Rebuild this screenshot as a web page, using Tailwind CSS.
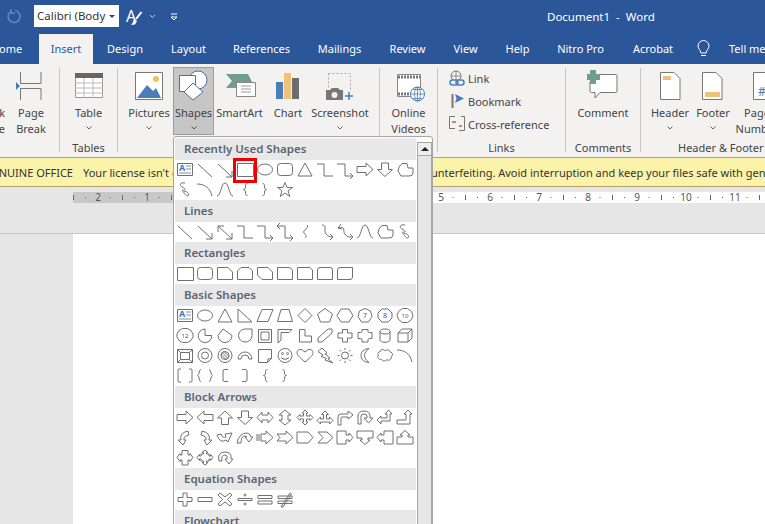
<!DOCTYPE html>
<html lang="en">
<head>
  <meta charset="UTF-8" />
  <title>Document1 - Word</title>
  <script src="https://cdn.jsdelivr.net/npm/@tailwindcss/browser@4"></script>
</head>
<body class="w-[765px] h-[524px] overflow-hidden relative bg-[#e6e6e6] text-[11px] leading-[16px] text-[#444] font-['Noto_Sans','Open_Sans',sans-serif]">

  <!-- Title bar -->
  <div class="h-[34px] bg-[#2b579a] flex items-center text-white">
    <svg class="w-[34px] h-[34px] shrink-0" viewBox="0 0 34 34" fill="none" stroke="#5f86c0" stroke-width="1.6"><path d="M10 12A6 6 0 1 0 15 10.500M11 9V13H15" /></svg>
    <div class="w-[85px] h-[22px] mt-[-2px] bg-white text-[#333] flex items-center pl-[3px] shrink-0 overflow-hidden whitespace-nowrap">
      <span class="w-[70px] overflow-hidden text-[11.500px]">Calibri (Body</span>
      <span class="ml-[2px] w-0 h-0 border-x-[3px] border-x-transparent border-t-[3px] border-t-[#444]"></span>
    </div>
    <svg class="w-[66px] h-[34px] shrink-0" viewBox="119 0 66 34" fill="none">
      <text x="126" y="22" font-size="16" fill="#fff" stroke="none" font-family="Noto Sans">A</text>
      <path d="M141.500 12L136 19" stroke="#fff" stroke-width="2" />
      <path d="M134 19L137 21L135 24.500L131 25Q133 23 134 19Z" fill="#fff" />
      <path d="M150 15L152.500 17.500L155 15" stroke="#c6d4ea" />
      <path d="M171 14H177M171 17H177L174 20Z" stroke="#fff" />
    </svg>
    <span class="ml-[362px] whitespace-nowrap text-[11.500px]">Document1&nbsp; -&nbsp; Word</span>
  </div>

  <!-- Tabs -->
  <div class="h-[30px] bg-[#2b579a] flex text-white whitespace-nowrap">
    <div class="w-[39px] shrink-0 overflow-hidden"><div class="w-[65px] h-[29px] ml-[-26px] flex justify-center items-center">Home</div></div>
    <div class="w-[54px] shrink-0 flex justify-center items-center pb-[1px] bg-[#f3f2f1] text-[#2b579a]">Insert</div>
    <div class="w-[64px] shrink-0 flex justify-center items-center pb-[1px]">Design</div>
    <div class="w-[63px] shrink-0 flex justify-center items-center pb-[1px]">Layout</div>
    <div class="w-[83px] shrink-0 flex justify-center items-center pb-[1px]">References</div>
    <div class="w-[73px] shrink-0 flex justify-center items-center pb-[1px]">Mailings</div>
    <div class="w-[63px] shrink-0 flex justify-center items-center pb-[1px]">Review</div>
    <div class="w-[53px] shrink-0 flex justify-center items-center pb-[1px]">View</div>
    <div class="w-[51px] shrink-0 flex justify-center items-center pb-[1px]">Help</div>
    <div class="w-[75px] shrink-0 flex justify-center items-center pb-[1px]">Nitro Pro</div>
    <div class="w-[70px] shrink-0 flex justify-center items-center pb-[1px]">Acrobat</div>
    <svg class="w-[41px] h-[30px] shrink-0" viewBox="688 34 41 30" fill="none" stroke="#fff"><path d="M701 53C700 49 698 49 698 46A5.500 5.500 0 0 1 709 46C709 49 707 49 706 53ZM701 55.500H706" /></svg>
    <div class="flex items-center pb-[1px]">Tell me</div>
  </div>

  <!-- Ribbon -->
  <div class="h-[93px] bg-[#f3f2f1] flex pt-[4px] whitespace-nowrap">
    <div class="w-[60px] h-[84px] shrink-0 border-r border-[#c8c6c4] flex flex-col">
      <div class="flex h-[68px]">
        <div class="w-[5px] pt-[37px] flex flex-col items-end overflow-hidden"><span>k</span><span>e</span></div>
        <div class="w-[52px] flex flex-col items-center">
          <svg class="w-[52px] h-[36px] shrink-0" viewBox="5 68 52 36" fill="none" stroke="#777"><path d="M20.500 72V83.500H41V72M20.500 100V88.500H41V100" /><path d="M16 82L20 86L16 90Z" fill="#4a7ebb" stroke="none" /></svg>
          <span class="text-center mt-[1px]">Page<br />Break</span>
        </div>
      </div>
    </div>
    <div class="w-[58px] h-[84px] shrink-0 border-r border-[#c8c6c4] flex flex-col items-center">
      <svg class="w-[57px] h-[36px] shrink-0" viewBox="60 68 57 36" fill="none">
        <path d="M75.500 73.500H102.500V97.500H75.500Z" fill="#fff" stroke="#999" />
        <path d="M75 73H103V78H75Z" fill="#666" />
        <path d="M75 83H103M75 88H103M75 93H103M84 78V98M93 78V98" stroke="#bbb" />
      </svg>
      <span class="mt-[1px]">Table</span>
      <svg class="w-[8px] h-[8px] mt-[3px]" viewBox="0 0 8 8" fill="none" stroke="#666"><path d="M1.500 2.500L4 5L6.500 2.500" /></svg>
      <span class="mt-auto mb-[-4px]">Tables</span>
    </div>
    <div class="w-[262px] h-[84px] shrink-0 border-r border-[#c8c6c4] flex pl-[7px]">
      <div class="w-[48px] h-[68px] flex flex-col items-center">
        <svg class="w-[48px] h-[36px] shrink-0" viewBox="125 68 48 36" fill="none">
          <path d="M135.500 72.500H162.500V99.500H135.500Z" fill="#fff" stroke="#777" />
          <circle cx="156" cy="79" r="3" fill="#f0c060" />
          <path d="M137 98L147 85L153 91L156 88L161 98Z" fill="#4a7ebb" />
        </svg>
        <span class="mt-[1px]">Pictures</span>
        <svg class="w-[8px] h-[8px] mt-[3px]" viewBox="0 0 8 8" fill="none" stroke="#666"><path d="M1.500 2.500L4 5L6.500 2.500" /></svg>
      </div>
      <div class="w-[41px] h-[68px] mt-[-1px] bg-[#c6c6c6] border border-[#9c9c9c] flex flex-col items-center">
        <svg class="w-[39px] h-[36px] shrink-0" viewBox="174 68 39 36" fill="none" stroke="#4a6fa5">
          <circle cx="198" cy="80" r="9" fill="#fff" />
          <path d="M179.500 75.500H195.500V91.500H179.500Z" fill="#fff" />
          <path d="M193 83L203 92L193 100L184 92Z" fill="#fff" />
        </svg>
        <span class="mt-[1px]">Shapes</span>
        <svg class="w-[8px] h-[8px] mt-[3px]" viewBox="0 0 8 8" fill="none" stroke="#555"><path d="M1.500 2.500L4 5L6.500 2.500" /></svg>
      </div>
      <div class="w-[51px] h-[68px] flex flex-col items-center">
        <svg class="w-[51px] h-[36px] shrink-0" viewBox="214 68 51 36" fill="none">
          <path d="M226 74H248L252 82H238V88H226L232 81Z" fill="#6f9d92" />
          <path d="M236.500 82.500H255.500V96.500H236.500Z" fill="#fff" stroke="#888" />
          <path d="M241 86H251M241 89H251M241 92H251" stroke="#999" />
        </svg>
        <span class="mt-[1px]">SmartArt</span>
      </div>
      <div class="w-[46px] h-[68px] flex flex-col items-center">
        <svg class="w-[46px] h-[36px] shrink-0" viewBox="265 68 46 36" fill="none">
          <path d="M276 82H283V99H276Z" fill="#4a7ebb" />
          <path d="M284 73H291V99H284Z" fill="#eec27a" />
          <path d="M292 78H299V99H292Z" fill="#6d6d6d" />
        </svg>
        <span class="mt-[1px]">Chart</span>
      </div>
      <div class="w-[58px] h-[68px] flex flex-col items-center">
        <svg class="w-[58px] h-[36px] shrink-0" viewBox="311 68 58 36" fill="none">
          <path d="M328.500 73.500H350.500V92" stroke="#aaa" stroke-dasharray="2 2" />
          <path d="M328.500 73.500V88" stroke="#aaa" stroke-dasharray="2 2" />
          <path d="M326 90H330L332 88H338L340 90H343V100H326Z" fill="#777" />
          <circle cx="334.500" cy="95" r="3" fill="#f3f2f1" />
          <path d="M349 92V100M345 96H353" stroke="#4a7ebb" stroke-width="1.500" />
        </svg>
        <span class="mt-[1px]">Screenshot</span>
        <svg class="w-[8px] h-[8px] mt-[3px]" viewBox="0 0 8 8" fill="none" stroke="#666"><path d="M1.500 2.500L4 5L6.500 2.500" /></svg>
      </div>
    </div>
    <div class="w-[58px] h-[84px] shrink-0 border-r border-[#c8c6c4] flex flex-col items-center">
      <svg class="w-[57px] h-[36px] shrink-0" viewBox="380 68 57 36" fill="none">
        <path d="M397.500 74.500H420.500V96.500H397.500Z" fill="#fff" stroke="#888" />
        <path d="M398 77H420M398 94H412" stroke="#777" stroke-width="3" stroke-dasharray="2 1" />
        <circle cx="417.500" cy="94" r="7" fill="#fff" stroke="#4a7ebb" />
        <path d="M410.500 94H424.500M417.500 87V101M413 89.500H422M413 98.500H422" stroke="#4a7ebb" stroke-width=".8" />
        <ellipse cx="417.500" cy="94" rx="3" ry="7" stroke="#4a7ebb" stroke-width=".8" />
      </svg>
      <span class="text-center mt-[1px]">Online<br />Videos</span>
    </div>
    <div class="w-[128px] h-[84px] shrink-0 border-r border-[#c8c6c4] flex flex-col">
      <div class="h-[23px] flex items-center">
        <svg class="w-[30px] h-[23px] shrink-0" viewBox="438 68 30 23" fill="none">
          <circle cx="456" cy="76" r="5" stroke="#777" />
          <path d="M451 76H461M456 71V81" stroke="#777" stroke-width=".8" />
          <rect x="450" y="80" width="8" height="5" rx="2.500" stroke="#4a7ebb" stroke-width="1.500" fill="#f3f2f1" />
          <rect x="456" y="80" width="8" height="5" rx="2.500" stroke="#4a7ebb" stroke-width="1.500" />
        </svg>
        <span class="mb-[2px]">Link</span>
      </div>
      <div class="h-[23px] flex items-center">
        <svg class="w-[30px] h-[23px] shrink-0" viewBox="438 91 30 23" fill="none">
          <path d="M452.500 94V108" stroke="#777" stroke-width="2" />
          <path d="M455 94L464 98.500L455 103L456.500 98.500Z" fill="#4a7ebb" />
        </svg>
        <span class="mb-[2px]">Bookmark</span>
      </div>
      <div class="h-[23px] flex items-center">
        <svg class="w-[30px] h-[23px] shrink-0" viewBox="438 114 30 23" fill="none">
          <path d="M455 116.500H449.500V128.500H455M461 116.500H464.500V130.500H459" stroke="#777" />
          <path d="M452 122H456M459 126H462" stroke="#d9534f" stroke-width="1.500" />
        </svg>
        <span class="mb-[2px]">Cross-reference</span>
      </div>
      <span class="text-center mt-auto mb-[-4px]">Links</span>
    </div>
    <div class="w-[75px] h-[84px] shrink-0 border-r border-[#c8c6c4] flex flex-col items-center">
      <svg class="w-[74px] h-[36px] shrink-0" viewBox="566 68 74 36" fill="none">
        <path d="M592 74.500H615.500Q617 74.500 617 76V91Q617 92.500 615.500 92.500H600L595 98V92.500H591.500Q590 92.500 590 91V82" fill="#fff" stroke="#777" />
        <path d="M590 70H596V74H600V80H596V84H590V80H587V74H590Z" fill="#6f9d92" />
      </svg>
      <span class="mt-[1px]">Comment</span>
      <span class="mt-auto mb-[-4px]">Comments</span>
    </div>
    <div class="h-[84px] flex flex-col shrink-0">
      <div class="flex h-[68px] pl-[7px]">
        <div class="w-[44px] flex flex-col items-center">
          <svg class="w-[44px] h-[36px] shrink-0" viewBox="648 68 44 36" fill="none">
            <path d="M660.500 72.500H674L680 78.500V99.500H660.500Z" fill="#fff" stroke="#777" />
            <path d="M663 76H671V80H663Z" fill="#eec27a" />
          </svg>
          <span class="mt-[1px]">Header</span>
          <svg class="w-[8px] h-[8px] mt-[3px]" viewBox="0 0 8 8" fill="none" stroke="#666"><path d="M1.500 2.500L4 5L6.500 2.500" /></svg>
        </div>
        <div class="w-[42px] flex flex-col items-center">
          <svg class="w-[42px] h-[36px] shrink-0" viewBox="692 68 42 36" fill="none">
            <path d="M702.500 72.500H716L722 78.500V99.500H702.500Z" fill="#fff" stroke="#777" />
            <path d="M705 92H720V97H705Z" fill="#eec27a" />
          </svg>
          <span class="mt-[1px]">Footer</span>
          <svg class="w-[8px] h-[8px] mt-[3px]" viewBox="0 0 8 8" fill="none" stroke="#666"><path d="M1.500 2.500L4 5L6.500 2.500" /></svg>
        </div>
        <div class="w-[46px] flex flex-col items-center">
          <svg class="w-[46px] h-[36px] shrink-0" viewBox="734 68 46 36" fill="none">
            <path d="M753.500 72.500H767L773 78.500V99.500H753.500Z" fill="#fff" stroke="#777" />
            <text x="758" y="96" font-size="12" fill="#4a7ebb" font-family="Noto Sans">#</text>
          </svg>
          <span class="text-center mt-[1px]">Page<br />Number</span>
        </div>
      </div>
      <span class="pl-[37px] mt-auto mb-[-4px]">Header &amp; Footer</span>
    </div>
  </div>

  <!-- License warning -->
  <div class="h-[30px] pt-[1px] bg-[#fbf3a9] border-y border-[#b9a36c] flex items-center whitespace-nowrap overflow-hidden text-[#333]">
    <span class="w-[73px] shrink-0 flex justify-end overflow-hidden">GENUINE OFFICE</span>
    <span class="w-[336px] ml-[10px] shrink-0 overflow-hidden">Your license isn't genuine, and you may be a victim of software</span>
    <span>counterfeiting. Avoid interruption and keep your files safe with genuine Office today.</span>
  </div>

  <!-- Ruler -->
  <div class="pl-[73px] pt-[5px] h-[47px] border-b border-[#c6c6c6]">
    <svg class="w-[692px] h-[11px] block" viewBox="73 192 692 11" fill="none" id="ruler"></svg>
  </div>

  <!-- Page -->
  <div class="ml-[73px] h-[300px] bg-white"></div>

  <!-- Shapes dropdown -->
  <div class="absolute left-[173px] top-[136px] w-[260px] h-[400px] bg-white border border-[#a6a6a6] rounded-t-[3px] flex">
    <div id="gallery" class="w-[241px] ml-[1px] mt-[1px] shrink-0"></div>
    <div class="w-[16px] ml-[1px] mt-[5px] bg-[#e6e6e6] border-x border-[#a6a6a6]">
      <div class="h-[14px] bg-[#eeeeee] border-y border-[#a6a6a6] flex items-center justify-center">
        <span class="w-0 h-0 border-x-[4px] border-x-transparent border-b-[4px] border-b-[#222]"></span>
      </div>
    </div>
  </div>

  <script>
    // ruler: number every inch, 0 sits at x=196
    let ruler = '<path d="M73 192H196V203H73Z" fill="#c8c8c8" /><path d="M196 192H765V203H196Z" fill="#fff" />';
    for (let n = -3; n <= 12; n++) {
      const x = 196 + n * 49;
      if (n !== 0) ruler += `<text x="${x}" y="201" font-size="10" text-anchor="middle" fill="#555" font-family="Noto Sans">${Math.abs(n)}</text>`;
      ruler += `<path d="M${x + 12} 197v1M${x + 36.5} 197v1M${x + 24.500} 195v5" stroke="#666" />`;
    }
    document.getElementById('ruler').innerHTML = ruler;

    const num = t => `<text x="10" y="12" font-size="${t.length > 1 ? 6 : 7}" text-anchor="middle" fill="#555" stroke="none" font-family="Noto Sans">${t}</text>`;
    const textbox = '<path d="M2.500 3.500H17.500V15.500H2.500Z" /><text x="4" y="11" font-size="9" font-weight="700" fill="#3b74c4" stroke="none" font-family="Noto Sans">A</text><path d="M11 6H16M11 9H16M4 13H16" stroke-width=".8" />';
    const line = 'M3 4L17 17', arrow = 'M3 4L17 17M17 11V17H11', dbl = 'M3 4L17 17M17 11V17H11M3 10V4H9';
    const rect = 'M2.500 3.500H18.500V16.500H2.500Z', ell = '<ellipse cx="10" cy="9.500" rx="7.500" ry="5.500" />';
    const rrect = '<rect x="2.500" y="3.500" width="15" height="12" rx="3" />';
    const tri = 'M10 3L17 16H3Z', elbow = 'M2 4H9V16H18', elbowA = 'M2 4H10V16H18M15 13L18 16L15 19', elbowD = 'M5 1L2 4L5 7M2 4H10V16H18M15 13L18 16L15 19';
    const rarrow = 'M2 6.500H11V3L18 9.500L11 16V12.500H2Z', darrow = 'M6.500 3H13.500V9.500H17.500L10 16.500L2.500 9.500H6.500Z';
    const free = 'M7 3.500H12L13 8H18V13Q18 16 14 16H6L3 11L4 7Z', scribble = 'M10 3C5 2 4 5 7 7C12 9 10 11 8 10C6 9 11 17 13 16C15 14 11 10 9 12';
    const arc = 'M2 4C10 4 15 8 17 16', curve = 'M2 16C6 16 6 3 10 3C14 3 14 16 18 16';
    const lbrace = 'M12.500 3.500C10.500 3.500 10.500 5 10.500 7C10.500 8.500 9.500 9.500 8.500 9.500C9.500 9.500 10.500 10.500 10.500 12C10.500 14 10.500 15.500 12.500 15.500';
    const rbrace = 'M7.500 3.500C9.500 3.500 9.500 5 9.500 7C9.500 8.500 10.500 9.500 11.500 9.500C10.500 9.500 9.500 10.500 9.500 12C9.500 14 9.500 15.500 7.500 15.500';
    const star = 'M10 2.500L12 7.500H17.500L13 10.800L14.800 16.500L10 13L5.200 16.500L7 10.800L2.500 7.500H8Z';

    const sections = [
      ['Recently Used Shapes', 20, [textbox, line, arrow, rect, ell, rrect, tri, elbow, elbowA, rarrow, darrow, free,
        scribble, arc, curve, lbrace, rbrace, star]],
      ['Lines', 20, [line, arrow, dbl, elbow, elbowA, elbowD, 'M12 3C15 6 7 8 9 11C11 13 12 14 10 16', 'M7 3C13 3 8 9 11 12C13 14 14 15 18 15M15 12L18 15L15 18', 'M3 6L6 2M3 6L7 7M3 6C12 4 7 9 10 12C12 15 13 15 18 15M15 12L18 15L15 18', curve, free, scribble]],
      ['Rectangles', 20, [rect, '<rect x="2.500" y="3.500" width="15" height="12" rx="3" />',
        'M2.500 3.500H13L17.500 8V15.500H2.500Z', 'M6 3.500H14L17.500 7V15.500H2.500V7Z', 'M2.500 3.500H13L17.500 8V15.500H7L2.500 11Z',
        'M2.500 3.500H13Q17.500 3.500 17.500 8V15.500H2.500Z', 'M2.500 3.500H15L17.500 6V15.500H2.500Z', 'M5 3.500H15Q17.500 3.500 17.500 6V15.500H2.500V6Q2.500 3.500 5 3.500Z', 'M5 3.500H17.500V13Q17.500 15.500 15 15.500H2.500V6Q2.500 3.500 5 3.500Z']],
      ['Basic Shapes', 20, [textbox, ell, tri, 'M3 3L17 16H3Z', 'M7 3.500H18L13 15.500H2Z', 'M6 3.500H14L17.500 15.500H2.500Z', 'M10 2.500L17 9.500L10 16.500L3 9.500Z', 'M10 2.500L17.500 8L14.500 16H5.500L2.500 8Z', 'M6 3H14L18 9.500L14 16H6L2 9.500Z',
        '<path d="M10 2.500L15.500 5L17 10.500L13.500 16H6.500L3 10.500L4.500 5Z" />' + num('7'), '<path d="M7 3H13L17 7V12L13 16H7L3 12V7Z" />' + num('8'), '<path d="M7.500 2.500H12.500L16.500 5.500L18 9.500L16.500 13.500L12.500 16.500H7.500L3.500 13.500L2 9.500L3.500 5.500Z" />' + num('10'),
        '<path d="M7.500 2.500H12.500L16 4.500L18 8V11L16 14.500L12.500 16.500H7.500L4 14.500L2 11V8L4 4.500Z" />' + num('12'), 'M10 3V9.500H16.800A6.800 6.800 0 1 1 10 3Z', 'M8 3L17 9.500A6.500 6.500 0 1 1 3 9.500Z', 'M10 3H17V9.500A6.500 6.500 0 0 1 10 16A6.500 6.500 0 0 1 10 3Z',
        'M3.500 3.500H16.500V16.500H3.500ZM6 6H14V14H6Z', 'M3 3.500H17L14 6.500H6V14L3 17Z', 'M4.500 3.500H10V10H16.500V16H4.500Z', 'M3 16V12L13 3H17V7L7 16Z', 'M7.500 3.500H12.500V7H17V12H12.500V16H7.500V12H3V7H7.500Z', 'M7 3.500H13V5.500Q13 6.500 14.500 6.500H17V12.500H14.500Q13 12.500 13 14V16H7V14Q7 12.500 5.500 12.500H3V6.500H5.500Q7 6.500 7 5.500Z', '<path d="M5 5.500V14C5 17 15 17 15 14V5.500" /><ellipse cx="10" cy="5.500" rx="5" ry="2.500" />', 'M3 7H13V16H3ZM3 7L7 3H17V12L13 16M13 7L17 3',
        'M2.500 3.500H17.500V16.500H2.500ZM5.500 6.500H14.500V13.500H5.500ZM2.500 3.500L5.500 6.500M17.500 3.500L14.500 6.500M2.500 16.500L5.500 13.500M17.500 16.500L14.500 13.500', '<circle cx="10" cy="9.500" r="7" /><circle cx="10" cy="9.500" r="3.500" />', '<circle cx="10" cy="9.500" r="7" /><circle cx="10" cy="9.500" r="4" /><path d="M7 6.500L13 12.500M5.500 8L11.500 14M8.500 5L14.500 11" />', 'M3 13A7 7 0 0 1 17 13H14A4 4 0 0 0 6 13Z', 'M3.500 3.500H16.500V12.500L12.500 16.500H3.500ZM12.500 16.500L13 13L16.500 12.500', '<circle cx="10" cy="9.500" r="7" /><circle cx="7.500" cy="7.500" r="1" /><circle cx="12.500" cy="7.500" r="1" /><path d="M6 11.500Q10 15 14 11.500" />', 'M10 16C4 11 2 9 2 6.500C2 4 5.500 2 8 4.500L10 6L12 4.500C14.500 2 18 4 18 6.500C18 9 16 11 10 16Z', 'M7 2L12 7L10 8L15 12L13 13L18 17L10 14L11.500 12.500L6 10.500L8 9L3 5.500Z', '<circle cx="10" cy="9.500" r="3.500" /><path d="M10 2V4M10 15V17M2.500 9.500H4.500M15.500 9.500H17.500M4.500 4L6 5.500M14 13.500L15.500 15M15.500 4L14 5.500M6 13.500L4.500 15" />', 'M14 2.500C8 3 6 6.500 6 9.500C6 13 8 16 14 16.500C11 14 9.500 12 9.500 9.500C9.500 7 11 5 14 2.500Z', 'M5 6C5 3 9 3 10 5C12 3 15 4 15 6C18 6 18 10 16 11C17 14 13 15 12 13.500C10 16 7 15 6.500 13.500C3 14 1.500 10 3.500 9.500C2 7 4 5.500 5 6Z', arc,
        'M6 3H4Q3 3 3 4V15Q3 16 4 16H6M14 3H16Q17 3 17 4V15Q17 16 16 16H14', 'M6 3.500C3.500 3.500 5 8 2.500 9.500C5 11 3.500 15.500 6 15.500M14 3.500C16.500 3.500 15 8 17.500 9.500C15 11 16.500 15.500 14 15.500', 'M13 3.500H10Q8 3.500 8 5V14Q8 15.500 10 15.500H13', 'M7 3.500H10Q12 3.500 12 5V14Q12 15.500 10 15.500H7', lbrace, rbrace]],
      ['Block Arrows', 20, [rarrow, 'M18 6.500H9V3L2 9.500L9 16V12.500H18Z', 'M2.500 10L10 3L17.500 10H13.500V16.500H6.500V10Z', darrow, 'M2 9.500L7 4V7H13V4L18 9.500L13 15V12H7V15Z', 'M10 2L16 7H13V12H16L10 17L4 12H7V7H4Z', 'M10 2L13 5H11.500V8H15V6.500L18 9.500L15 12.500V11H11.500V14H13L10 17L7 14H8.500V11H5V12.500L2 9.500L5 6.500V8H8.500V5H7Z', 'M10 3L13.500 6.500H11.500V11H14.500V9L18 12.500L14.500 16V14H5.500V16L2 12.500L5.500 9V11H8.500V6.500H6.500Z', 'M3 17V9Q3 6 6 6H13V3L18 7L13 11V9H7Q6 9 6 10V17Z', 'M3 16V8Q3 3 9 3Q15 3 15 8V10H18L13.500 15L9 10H12V8Q12 6 9 6Q6 6 6 8V16Z', 'M2 12L6 8V10H12V6H10L13.500 2L17 6H15V13H6V16Z', 'M2 12H11V6H9L13 2L17 6H15V16H2Z',
        'M13 3Q4 5 6 12H3L8 17L11 12H9Q8 8 14 7Z', 'M7 3Q16 5 14 12H17L12 17L9 12H11Q12 8 6 7Z', 'M2 7Q5 16 11 12L13 14L17 5L10 6L11 9Q8 11 6 6Z', 'M2 15Q4 5 12 5Q15 5 16 9H18L14 14L10 9H12Q11 8 9 8Q6 9 6 15Z', 'M2 6V13M4 6V13M6 6H11V3L18 9.500L11 16V13H6Z', 'M2 6H11V3L18 9.500L11 16V13H2L5 9.500Z', 'M2 4H13L18 9.500L13 15H2Z', 'M3 4H12L18 9.500L12 15H3L8 9.500Z', 'M2 3H11V7H14V5L18 9.500L14 14V12H11V16H2Z', 'M2 3H18V10H13V12H15L10 16.500L5 12H7V10H2Z', 'M18 3H9V7H6V5L2 9.500L6 14V12H9V16H18Z', 'M10 2.500L15 7H13V9H18V16H2V9H7V7H5Z',
        'M7 2.500H13V7H15V5.500L18 9.500L15 13.500V12H13V17H7V12H5V13.500L2 9.500L5 5.500V7H7Z', 'M10 2L13 4.500H11.500V6H14V8H15.500V6.500L18 9.500L15.500 12.500V11H14V13H11.500V14.500H13L10 17L7 14.500H8.500V13H6V11H4.500V12.500L2 9.500L4.500 6.500V8H6V6H8.500V4.500H7Z', 'M4 13Q2 4 10 4Q17 4 16 11H18L14 16L10 11H12Q13 7 10 7Q6 7 7 13Z']],
      ['Equation Shapes', 20, ['M8 3H12V7.500H17V11.500H12V16H8V11.500H3V7.500H8Z', 'M3 7.500H17V11.500H3Z', 'M5 3L10 7L15 3L17 5L12.500 9.500L17 14L15 16L10 12L5 16L3 14L7.500 9.500L3 5Z', '<path d="M3 8.500H17V10.500H3Z" /><circle cx="10" cy="5" r="1" /><circle cx="10" cy="14" r="1" />', 'M3 5.500H17V8.500H3ZM3 11H17V14H3Z', 'M3 6H17V8.500H3ZM3 11H17V13.500H3ZM6 17L15 3L16.500 4L8 17Z']],
      ['Flowchart', 20, []],
    ];

    const draw = s => s.startsWith('M') ? `<path d="${s}" />` : s;
    document.getElementById('gallery').innerHTML = sections.map(([title, rowH, shapes], si) => `
      <div class="h-[22px] bg-[#e8e8e8] pl-[9px] flex items-center font-semibold text-[11.500px] text-[#5b6573] whitespace-nowrap">${title}</div>
      <div class="grid grid-cols-[repeat(12,20px)]" style="grid-auto-rows:${rowH}px">
        ${shapes.map((s, i) => `<div class="relative">
          <svg class="w-[20px] h-[20px] block" viewBox="0 0 20 20" fill="none" stroke="#707070" stroke-width="1">${draw(s)}</svg>
          ${si === 0 && i === 3 ? '<span class="absolute left-[-2px] top-[-2px] w-[24px] h-[25px] border-[3px] border-[#f00000]"></span>' : ''}
        </div>`).join('')}
      </div>`).join('');
  </script>
</body>
</html>
